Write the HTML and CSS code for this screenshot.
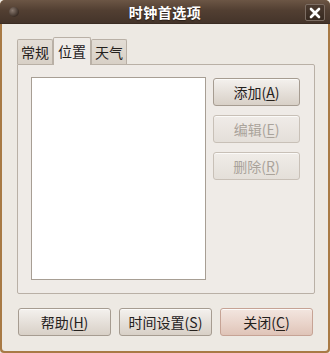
FILE: index.html
```html
<!DOCTYPE html>
<html lang="zh-CN">
<head>
<meta charset="utf-8">
<link rel="stylesheet" href="styles.css">
</head>
<body>
<div class="window">
  <div class="titlebar">
    <span class="menu-dot"></span>
    <span class="title">时钟首选项</span>
    <span class="close">
      <svg width="12" height="12" viewBox="0 0 12 12"><path d="M2 2 L10 10 M10 2 L2 10" stroke="#fff" stroke-width="2.6" stroke-linecap="round"/></svg>
    </span>
  </div>
  <div class="body">
    <div class="tabs">
      <div class="tab">常规</div>
      <div class="tab active">位置</div>
      <div class="tab">天气</div>
    </div>
    <div class="frame">
      <div class="list"></div>
      <div class="side">
        <button class="btn">添加(<u>A</u>)</button>
        <button class="btn disabled">编辑(<u>E</u>)</button>
        <button class="btn disabled">删除(<u>R</u>)</button>
      </div>
    </div>
    <div class="actions">
      <button class="btn">帮助(<u>H</u>)</button>
      <button class="btn">时间设置(<u>S</u>)</button>
      <button class="btn primary">关闭(<u>C</u>)</button>
    </div>
  </div>
</div>
</body>
</html>
```
FILE: styles.css
```css
* { box-sizing: border-box; }
html, body { margin: 0; padding: 0; background: #ede9e3; }
body { font-family: "Noto Sans CJK SC", "Noto Sans", sans-serif; font-size: 14px; color: #2a2622; }

.window {
  width: 330px;
  height: 353px;
  background: #a87a45;
  border-radius: 5px 5px 4px 4px;
  display: flex;
  flex-direction: column;
  overflow: hidden;
}

.titlebar {
  height: 24px;
  flex: none;
  background: linear-gradient(#6c5645 0%, #523f32 45%, #44342a 100%);
  display: flex;
  align-items: center;
  justify-content: center;
  position: relative;
  border-bottom: 1px solid #3a2c23;
}
.title {
  color: #fff;
  font-weight: bold;
  font-size: 14px;
  letter-spacing: 0.5px;
  text-shadow: 0 1px 1px #2a1f18;
}
.menu-dot {
  position: absolute;
  left: 9px;
  top: 7px;
  width: 10px;
  height: 10px;
  border-radius: 50%;
  background: radial-gradient(circle at 35% 35%, #8a7a70, #3a2d25 70%);
}
.close {
  position: absolute;
  right: 5px;
  top: 4px;
  width: 20px;
  height: 17px;
  border: 1px solid #7c6d63;
  border-radius: 2px;
  background: linear-gradient(#4c3b30, #362920);
  display: flex;
  align-items: center;
  justify-content: center;
}

.body {
  flex: 1;
  margin: 0 2px 2px 2px;
  background: #ede9e3;
  border-radius: 0 0 3px 3px;
  padding: 12px 13px 0 15px;
  display: flex;
  flex-direction: column;
}

.tabs {
  display: flex;
  align-items: flex-end;
  height: 28px;
}
.tab {
  height: 25px;
  padding: 0 3px;
  border: 1px solid #b9b0a6;
  border-bottom: none;
  border-radius: 2px 2px 0 0;
  background: linear-gradient(#e3ddd5, #d8d0c6);
  display: flex;
  align-items: center;
  color: #24201c;
}
.tab.active {
  height: 28px;
  background: #efebe7;
  margin-bottom: -1px;
  position: relative;
  z-index: 1;
  padding: 0 4px 2px;
}

.frame {
  width: 298px;
  height: 230px;
  border: 1px solid #b9b0a6;
  border-radius: 0 2px 2px 2px;
  background: #efebe7;
  padding: 12px 14px 13px 13px;
  display: flex;
  gap: 7px;
}
.list {
  width: 175px;
  height: 203px;
  background: #fff;
  border: 1px solid #a79e94;
}
.side {
  width: 87px;
  padding-top: 1px;
  display: flex;
  flex-direction: column;
  gap: 9px;
}

.btn {
  font-family: inherit;
  font-size: 14px;
  height: 28px;
  border: 1px solid #a69c91;
  border-radius: 3px;
  background: linear-gradient(#f4f1ee, #e3ddd6 60%, #d8d0c7);
  color: #24201c;
  padding: 0;
  display: flex;
  align-items: center;
  justify-content: center;
  box-shadow: inset 0 1px 0 #fbfaf8;
}
.btn u { text-underline-offset: 2px; }
.btn.disabled {
  color: #aaa39b;
  border-color: #c8c0b7;
  background: linear-gradient(#f0ece8, #e4dfd9);
}
.btn.primary {
  border-color: #c6a395;
  background: linear-gradient(#f3e6e0, #e8d2c8 60%, #dfc4b8);
}

.actions {
  margin-top: 14px;
  padding-left: 1px;
  display: grid;
  grid-template-columns: 93px 93px 93px;
  column-gap: 8px;
}
```
